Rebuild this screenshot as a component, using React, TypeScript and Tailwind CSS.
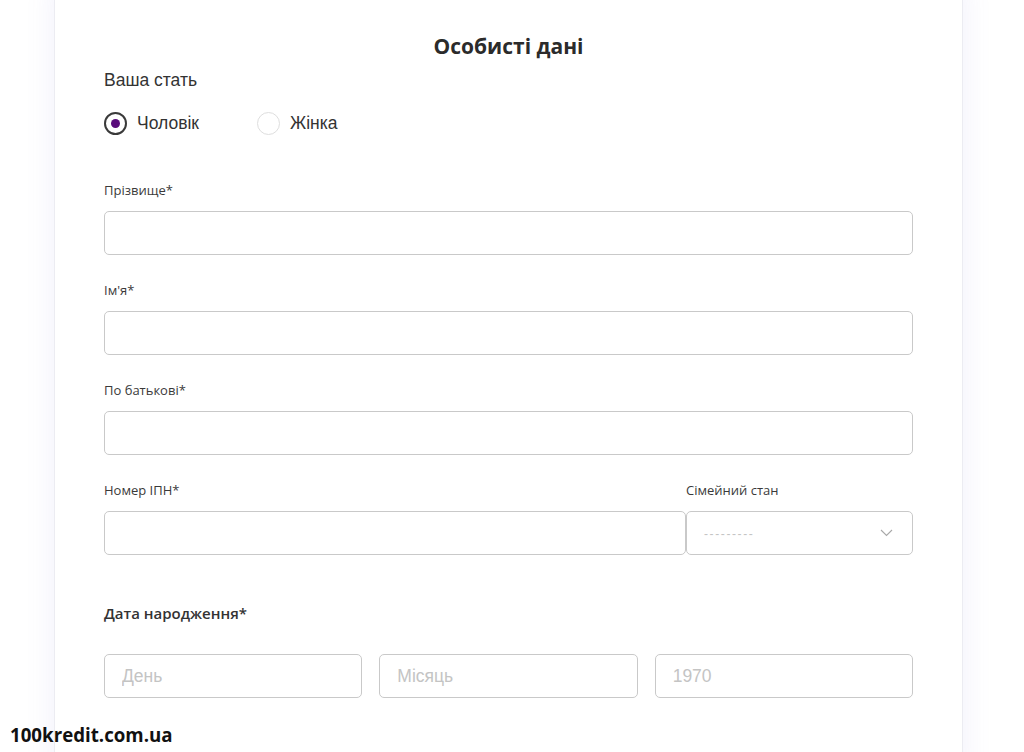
import React from "react";

const labelCls = "block text-[13px] leading-[20px] text-[#3a3a3a] mb-[11px]";
const inputCls =
  "block w-full h-[44px] rounded-[5px] border border-[#c9c9c9] bg-white px-[17px] text-[17.5px] text-[#333] placeholder:text-[#c4c4c4] outline-none";

function Field({ label }: { label: string }) {
  return (
    <div className="mt-[25px] first:mt-0">
      <label className={labelCls} style={{ fontFamily: "'Open Sans', sans-serif" }}>
        {label}
      </label>
      <input className={inputCls} />
    </div>
  );
}

export default function App() {
  return (
    <div className="relative w-[1024px] h-[752px] overflow-hidden bg-white">
      <div className="ml-[54px] w-[909px] h-[800px] -mt-[20px] bg-white border-x border-[#ececf2] shadow-[0_0_28px_rgba(120,110,220,0.10)] pt-[52px] px-[49px]">
        <h1
          className="text-center text-[21px] leading-[28px] font-bold text-[#2b2b2b]"
          style={{ fontFamily: "'Open Sans', sans-serif" }}
        >
          Особисті дані
        </h1>
        <div
          className="mt-[8px] text-[17.5px] leading-[24px] text-[#333]"
          style={{ fontFamily: "'Liberation Sans', Arial, sans-serif" }}
        >
          Ваша стать
        </div>
        <div
          className="mt-[19px] flex items-center h-[24px] text-[17.5px] text-[#333]"
          style={{ fontFamily: "'Liberation Sans', Arial, sans-serif" }}
        >
          <div className="flex items-center">
            <span className="w-[23px] h-[23px] rounded-full border-2 border-[#3a3a3a] flex items-center justify-center">
              <span className="w-[9px] h-[9px] rounded-full bg-[#5a0b7c]" />
            </span>
            <span className="ml-[10px]">Чоловік</span>
          </div>
          <div className="flex items-center ml-[58px]">
            <span className="w-[23px] h-[23px] rounded-full border border-[#dedede]" />
            <span className="ml-[10px]">Жінка</span>
          </div>
        </div>

        <div className="mt-[45px]">
          <Field label="Прізвище*" />
          <Field label="Ім'я*" />
          <Field label="По батькові*" />
          <div className="mt-[25px] flex">
            <div className="w-[582px]">
              <label className={labelCls} style={{ fontFamily: "'Open Sans', sans-serif" }}>
                Номер ІПН*
              </label>
              <input className={inputCls} />
            </div>
            <div className="flex-1">
              <label className={labelCls} style={{ fontFamily: "'Open Sans', sans-serif" }}>
                Сімейний стан
              </label>
              <div className="h-[44px] rounded-[5px] border border-[#c9c9c9] flex items-center justify-between pl-[17px] pr-[19px]">
                <span
                  className="text-[12px] text-[#c4c4c4] tracking-[1.6px] mt-[2px]"
                  style={{ fontFamily: "'Liberation Sans', Arial, sans-serif" }}
                >
                  ---------
                </span>
                <svg width="13" height="8" viewBox="0 0 13 8" fill="none">
                  <path d="M1 1l5.5 5.5L12 1" stroke="#a8a8a8" strokeWidth="1.1" />
                </svg>
              </div>
            </div>
          </div>
        </div>

        <div
          className="mt-[48px] text-[15px] leading-[20px] font-semibold text-[#333]"
          style={{ fontFamily: "'Open Sans', sans-serif" }}
        >
          Дата народження*
        </div>
        <div
          className="mt-[31px] grid grid-cols-3 gap-[17px]"
          style={{ fontFamily: "'Liberation Sans', Arial, sans-serif" }}
        >
          <input className={inputCls} placeholder="День" />
          <input className={inputCls} placeholder="Місяць" />
          <input className={inputCls} placeholder="1970" />
        </div>
      </div>

      <div
        className="absolute left-[10px] top-[723px] text-[18.7px] leading-[24px] font-bold text-[#111]"
        style={{ fontFamily: "'Open Sans', sans-serif" }}
      >
        100kredit.com.ua
      </div>
    </div>
  );
}
